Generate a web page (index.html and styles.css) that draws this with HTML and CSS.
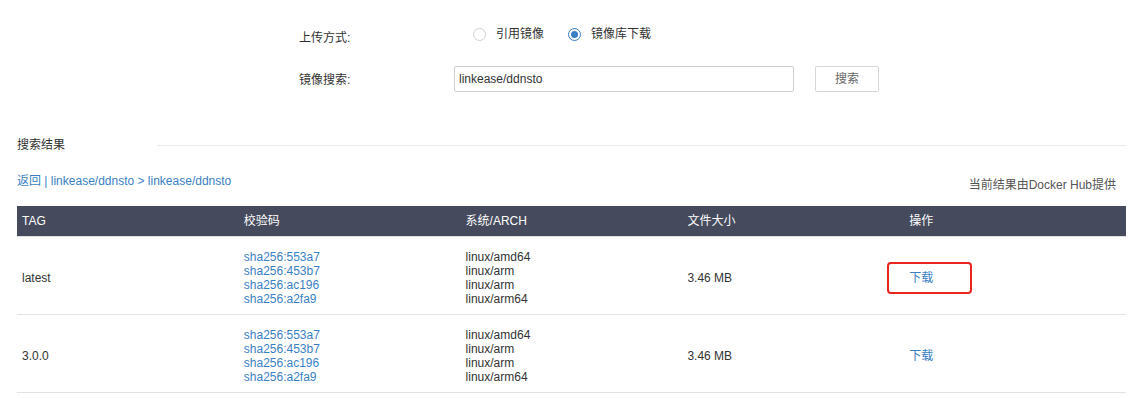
FILE: index.html
```html
<!DOCTYPE html>
<html lang="zh-CN">
<head>
    <meta charset="UTF-8">
    <title>镜像库下载</title>
    <link rel="stylesheet" href="styles.css">
</head>
<body>
    <div class="page">
        <form class="upload-form">
            <div class="form-row">
                <label class="form-label">上传方式:</label>
                <div class="radio-group">
                    <span class="radio"><i class="radio-dot"></i>引用镜像</span>
                    <span class="radio checked"><i class="radio-dot"></i>镜像库下载</span>
                </div>
            </div>
            <div class="form-row">
                <label class="form-label search-label">镜像搜索:</label>
                <input type="text" class="search-input" value="linkease/ddnsto">
                <button type="button" class="search-button">搜索</button>
            </div>
        </form>

        <div class="section-title">
            <span>搜索结果</span>
            <div class="section-line"></div>
        </div>

        <div class="result-bar">
            <a class="crumbs">返回 | linkease/ddnsto &gt; linkease/ddnsto</a>
            <span class="source">当前结果由Docker Hub提供</span>
        </div>

        <table class="result-table">
            <thead>
                <tr>
                    <th>TAG</th>
                    <th>校验码</th>
                    <th>系统/ARCH</th>
                    <th>文件大小</th>
                    <th>操作</th>
                </tr>
            </thead>
            <tbody>
                <tr>
                    <td>latest</td>
                    <td class="digests">
                        <a>sha256:553a7</a>
                        <a>sha256:453b7</a>
                        <a>sha256:ac196</a>
                        <a>sha256:a2fa9</a>
                    </td>
                    <td class="arch">linux/amd64<br>linux/arm<br>linux/arm<br>linux/arm64</td>
                    <td>3.46 MB</td>
                    <td><a class="download marked">下载</a></td>
                </tr>
                <tr>
                    <td>3.0.0</td>
                    <td class="digests">
                        <a>sha256:553a7</a>
                        <a>sha256:453b7</a>
                        <a>sha256:ac196</a>
                        <a>sha256:a2fa9</a>
                    </td>
                    <td class="arch">linux/amd64<br>linux/arm<br>linux/arm<br>linux/arm64</td>
                    <td>3.46 MB</td>
                    <td><a class="download">下载</a></td>
                </tr>
            </tbody>
        </table>
    </div>
</body>
</html>
```

FILE: styles.css
```css
:root {
    --header-dark: #454a5c;
    --link-blue: #3a7fc3;
    --text: #333;
    --line: #e3e3e3;
}

* {
    margin: 0;
    padding: 0;
    box-sizing: border-box;
}

body {
    background: #fff;
    color: var(--text);
    font-family: 'Liberation Sans', 'Noto Sans CJK SC', sans-serif;
    font-size: 12px;
    line-height: 14px;
}

a {
    color: var(--link-blue);
    text-decoration: none;
    cursor: pointer;
}

.page {
    padding: 0 6px 0 17px;
}

.upload-form {
    padding: 22px 0 0 282px;
}

.form-row {
    display: flex;
    align-items: center;
    height: 24px;
    margin-bottom: 21px;
}

.form-label {
    width: 155px;
    padding-top: 8px;
}

.search-label {
    padding-top: 1px;
}

.radio-group {
    display: flex;
    margin-left: 19px;
    gap: 24px;
}

.radio {
    display: flex;
    align-items: center;
    color: #333;
}

.radio-dot {
    width: 13px;
    height: 13px;
    border: 1px solid #d0d0d0;
    border-radius: 50%;
    margin-right: 10px;
    display: inline-block;
    position: relative;
}

.radio.checked .radio-dot {
    border-color: #3a7fc3;
}

.radio.checked .radio-dot::after {
    content: "";
    position: absolute;
    left: 2px;
    top: 2px;
    width: 7px;
    height: 7px;
    border-radius: 50%;
    background: #3a7fc3;
}

.search-input {
    width: 340px;
    height: 26px;
    border: 1px solid #cfcfcf;
    border-radius: 2px;
    padding: 0 4px;
    font: inherit;
    color: #333;
}

.search-button {
    width: 64px;
    height: 26px;
    margin-left: 21px;
    border: 1px solid #d6d6d6;
    border-radius: 2px;
    background: #fff;
    color: #666;
    font: inherit;
}

.section-title {
    display: flex;
    align-items: center;
    margin-top: 47px;
    height: 14px;
}

.section-title span {
    width: 140px;
}

.section-line {
    flex: 1;
    height: 1px;
    background: #ebebeb;
}

.result-bar {
    display: flex;
    justify-content: space-between;
    margin-top: 22px;
    height: 28px;
}

.crumbs {
    align-self: flex-start;
}

.source {
    align-self: flex-end;
    margin-right: 10px;
    padding-bottom: 10px;
    color: #555;
}

.result-table {
    width: 100%;
    border-collapse: collapse;
    table-layout: fixed;
    margin-top: 4px;
}

.result-table th {
    background: var(--header-dark);
    color: #fff;
    font-weight: normal;
    text-align: left;
    height: 30px;
    padding: 0 5px;
    border-bottom: 1px solid #e0e0e0;
}

.result-table td {
    padding: 13px 5px 8px;
    border-bottom: 1px solid var(--line);
    vertical-align: middle;
    height: 77px;
}

.digests a {
    display: block;
}

.download {
    display: inline-block;
}

.download.marked {
    border: 2px solid #e8251f;
    border-radius: 4px;
    padding: 7px 37px 7px 20px;
    margin-left: -22px;
}
```
